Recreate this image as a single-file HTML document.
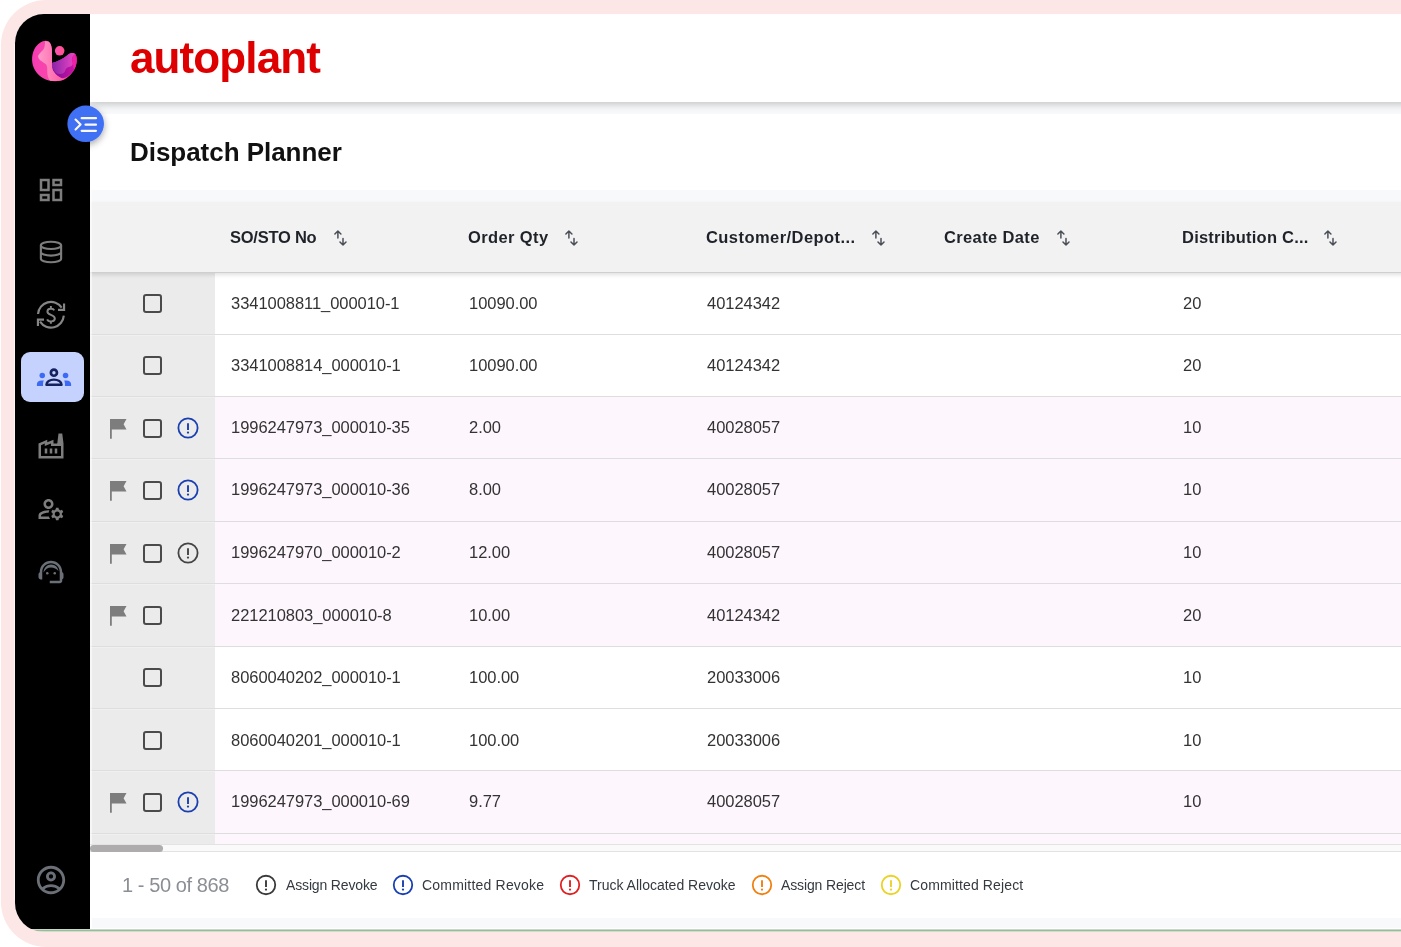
<!DOCTYPE html>
<html lang="en">
<head>
<meta charset="utf-8">
<title>Dispatch Planner</title>
<style>
*{box-sizing:border-box;margin:0;padding:0}
html,body{width:1401px;height:947px;overflow:hidden;background:#fff;font-family:"Liberation Sans",sans-serif;color:#333}
.abs{position:absolute}
#brand,#title,.th,.td,#count,.lg{will-change:transform}
#frame{position:absolute;left:1px;top:0;width:1400px;height:947px;background:#fce7e6;border-radius:45px 0 0 45px}
#app{position:absolute;left:15px;top:14px;width:1386px;height:918px;border-radius:29px 0 0 29px;overflow:hidden;background:linear-gradient(to bottom,#c9d6c9 0 915px,#c9d6c9 915px 916px,#a0b6a1 916px 917px,#c6e4c3 917px 918px)}
#inner{position:absolute;left:0;top:0;width:1386px;height:915px;background:#f8f9fa;overflow:hidden}
#side{position:absolute;left:0;top:0;width:75px;height:915px;background:#000;z-index:5}
#main{position:absolute;left:75px;top:0;width:1311px;height:915px}
#hdr{position:absolute;left:0;top:0;width:1360px;height:88px;background:#fff;box-shadow:0 2px 8px rgba(0,0,0,.23)}
#brand{position:absolute;left:40px;top:18px;font-size:44px;font-weight:700;color:#de0000;line-height:52px;letter-spacing:-.88px}
#titlebar{position:absolute;left:0;top:100px;width:1311px;height:76px;background:#fff}
#title{position:absolute;left:40px;top:22px;font-size:26px;font-weight:700;color:#111;line-height:32px;letter-spacing:-.04px}
#thead{position:absolute;left:0;top:188px;width:1360px;height:71px;background:#f2f2f2;border-bottom:1px solid #cfcfcf;box-shadow:0 2px 4px rgba(0,0,0,.12);z-index:3}
.th{position:absolute;top:0;height:70px;line-height:70px;font-size:16.5px;font-weight:700;color:#1f2329;white-space:nowrap}
.th svg{position:absolute;top:28px}
#tbody{position:absolute;left:0;top:258px;width:1311px;height:572px;overflow:hidden;background:#fff}
.row{position:absolute;left:0;width:1311px;border-bottom:1px solid #dedede;background:#fff}
.row.p{background:#fdf6fd}
.fz{position:absolute;left:0;top:0;width:125px;height:100%;background:#ebebeb;box-shadow:inset 0 1px 0 #f1eff1}
.td{position:absolute;top:0;font-size:16.5px;color:#333;white-space:nowrap;letter-spacing:-.05px}
.ic{position:absolute;left:0;width:125px;height:0}
.cb{position:absolute;left:53px;top:22px;width:19px;height:19px;border:2px solid #4a4a4a;border-radius:3px}
.flag{position:absolute;left:20px;top:22px}
.ex{position:absolute;left:87.2px;top:19.900px}
#sbar{position:absolute;left:0;top:830px;width:1311px;height:8px;background:#fafafa;border-top:1px solid #e3e3e3;border-bottom:1px solid #e2e2e2}
#thumb{position:absolute;left:0;top:0;width:73px;height:7px;border-radius:3.5px;background:#aeacad}
#foot{position:absolute;left:0;top:838px;width:1311px;height:66px;background:#fff}
#count{position:absolute;left:31.5px;top:21px;font-size:20px;line-height:24px;color:#8b8f95;white-space:nowrap;letter-spacing:-.42px}
.lg{position:absolute;top:0;height:66px;line-height:66px;font-size:14px;color:#343a40;white-space:nowrap}
.lgi{position:absolute;top:22.200px;margin-left:.3px}
</style>
</head>
<body>
<div id="frame"></div>
<div class="abs" style="left:14px;top:44px;width:1px;height:856px;background:#fff3f3"></div>
<div id="app"><div id="inner">
  <div id="main">
    <div id="titlebar"><div id="title">Dispatch Planner</div></div>
    <div id="thead">
<div class="th" style="left:140px;letter-spacing:-0.25px">SO/STO No<svg width="14" height="18" viewBox="0 0 14 18" style="left:103.5px"><path d="M3.9 7.900V1M0.900 4L3.900 1L6.900 4M9 8.500V15M6 12L9 15L12 12" fill="none" stroke="#4a4f57" stroke-width="1.5" stroke-linecap="round" stroke-linejoin="round"/></svg></div>
<div class="th" style="left:378px;letter-spacing:0.39px">Order Qty<svg width="14" height="18" viewBox="0 0 14 18" style="left:97px"><path d="M3.9 7.900V1M0.900 4L3.900 1L6.900 4M9 8.500V15M6 12L9 15L12 12" fill="none" stroke="#4a4f57" stroke-width="1.5" stroke-linecap="round" stroke-linejoin="round"/></svg></div>
<div class="th" style="left:616px;letter-spacing:0.44px">Customer/Depot...<svg width="14" height="18" viewBox="0 0 14 18" style="left:165.5px"><path d="M3.9 7.900V1M0.900 4L3.900 1L6.900 4M9 8.500V15M6 12L9 15L12 12" fill="none" stroke="#4a4f57" stroke-width="1.5" stroke-linecap="round" stroke-linejoin="round"/></svg></div>
<div class="th" style="left:854px;letter-spacing:0.36px">Create Date<svg width="14" height="18" viewBox="0 0 14 18" style="left:112.5px"><path d="M3.9 7.900V1M0.900 4L3.900 1L6.900 4M9 8.500V15M6 12L9 15L12 12" fill="none" stroke="#4a4f57" stroke-width="1.5" stroke-linecap="round" stroke-linejoin="round"/></svg></div>
<div class="th" style="left:1092px;letter-spacing:0.22px">Distribution C...<svg width="14" height="18" viewBox="0 0 14 18" style="left:142px"><path d="M3.9 7.900V1M0.900 4L3.900 1L6.900 4M9 8.500V15M6 12L9 15L12 12" fill="none" stroke="#4a4f57" stroke-width="1.5" stroke-linecap="round" stroke-linejoin="round"/></svg></div>
</div>
    <div id="tbody">
<div class="row" style="top:1px;height:62px;line-height:61px"><div class="fz" style="box-shadow:none"><div class="ic" style="top:-1px"><div class="cb"></div></div></div><div class="td" style="left:140.6px">3341008811_000010-1</div><div class="td" style="left:378.6px">10090.00</div><div class="td" style="left:616.6px">40124342</div><div class="td" style="left:1092.6px">20</div></div>
<div class="row" style="top:63px;height:62px;line-height:61px"><div class="fz"><div class="ic" style="top:-1px"><div class="cb"></div></div></div><div class="td" style="left:140.6px">3341008814_000010-1</div><div class="td" style="left:378.6px">10090.00</div><div class="td" style="left:616.6px">40124342</div><div class="td" style="left:1092.6px">20</div></div>
<div class="row p" style="top:125px;height:62px;line-height:61px"><div class="fz"><div class="ic" style="top:0px"><svg class="flag" width="18" height="21" viewBox="0 0 18 21"><path d="M0 0H16.5L13.6 5.3L16.5 10.6H1.8V19.700H0Z" fill="#7d7d7d"/></svg><div class="cb"></div><svg class="ex" width="22" height="22" viewBox="0 0 22 22"><circle cx="11" cy="11" r="9.6" fill="none" stroke="#1a3fb0" stroke-width="1.8"/><path d="M11 6.2V13" stroke="#1a3fb0" stroke-width="1.9" fill="none"/><circle cx="11" cy="15.6" r="1.15" fill="#1a3fb0"/></svg></div></div><div class="td" style="left:140.6px">1996247973_000010-35</div><div class="td" style="left:378.6px">2.00</div><div class="td" style="left:616.6px">40028057</div><div class="td" style="left:1092.6px">10</div></div>
<div class="row p" style="top:187px;height:63px;line-height:62px"><div class="fz"><div class="ic" style="top:0px"><svg class="flag" width="18" height="21" viewBox="0 0 18 21"><path d="M0 0H16.5L13.6 5.3L16.5 10.6H1.8V19.700H0Z" fill="#7d7d7d"/></svg><div class="cb"></div><svg class="ex" width="22" height="22" viewBox="0 0 22 22"><circle cx="11" cy="11" r="9.6" fill="none" stroke="#1a3fb0" stroke-width="1.8"/><path d="M11 6.2V13" stroke="#1a3fb0" stroke-width="1.9" fill="none"/><circle cx="11" cy="15.6" r="1.15" fill="#1a3fb0"/></svg></div></div><div class="td" style="left:140.6px;top:-1px">1996247973_000010-36</div><div class="td" style="left:378.6px;top:-1px">8.00</div><div class="td" style="left:616.6px;top:-1px">40028057</div><div class="td" style="left:1092.6px;top:-1px">10</div></div>
<div class="row p" style="top:250px;height:62px;line-height:61px"><div class="fz"><div class="ic" style="top:0px"><svg class="flag" width="18" height="21" viewBox="0 0 18 21"><path d="M0 0H16.5L13.6 5.3L16.5 10.6H1.8V19.700H0Z" fill="#7d7d7d"/></svg><div class="cb"></div><svg class="ex" width="22" height="22" viewBox="0 0 22 22"><circle cx="11" cy="11" r="9.6" fill="none" stroke="#444" stroke-width="1.8"/><path d="M11 6.2V13" stroke="#444" stroke-width="1.9" fill="none"/><circle cx="11" cy="15.6" r="1.15" fill="#444"/></svg></div></div><div class="td" style="left:140.6px">1996247970_000010-2</div><div class="td" style="left:378.6px">12.00</div><div class="td" style="left:616.6px">40028057</div><div class="td" style="left:1092.6px">10</div></div>
<div class="row p" style="top:312px;height:63px;line-height:62px"><div class="fz"><div class="ic" style="top:0px"><svg class="flag" width="18" height="21" viewBox="0 0 18 21"><path d="M0 0H16.5L13.6 5.3L16.5 10.6H1.8V19.700H0Z" fill="#7d7d7d"/></svg><div class="cb"></div></div></div><div class="td" style="left:140.6px">221210803_000010-8</div><div class="td" style="left:378.6px">10.00</div><div class="td" style="left:616.6px">40124342</div><div class="td" style="left:1092.6px">20</div></div>
<div class="row" style="top:375px;height:62px;line-height:61px"><div class="fz"><div class="ic" style="top:-1px"><div class="cb"></div></div></div><div class="td" style="left:140.6px">8060040202_000010-1</div><div class="td" style="left:378.6px">100.00</div><div class="td" style="left:616.6px">20033006</div><div class="td" style="left:1092.6px">10</div></div>
<div class="row" style="top:437px;height:62px;line-height:61px"><div class="fz"><div class="ic" style="top:0px"><div class="cb"></div></div></div><div class="td" style="left:140.6px;top:1px">8060040201_000010-1</div><div class="td" style="left:378.6px;top:1px">100.00</div><div class="td" style="left:616.6px;top:1px">20033006</div><div class="td" style="left:1092.6px;top:1px">10</div></div>
<div class="row p" style="top:499px;height:63px;line-height:62px"><div class="fz"><div class="ic" style="top:0px"><svg class="flag" width="18" height="21" viewBox="0 0 18 21"><path d="M0 0H16.5L13.6 5.3L16.5 10.6H1.8V19.700H0Z" fill="#7d7d7d"/></svg><div class="cb"></div><svg class="ex" width="22" height="22" viewBox="0 0 22 22"><circle cx="11" cy="11" r="9.6" fill="none" stroke="#1a3fb0" stroke-width="1.8"/><path d="M11 6.2V13" stroke="#1a3fb0" stroke-width="1.9" fill="none"/><circle cx="11" cy="15.6" r="1.15" fill="#1a3fb0"/></svg></div></div><div class="td" style="left:140.6px;top:-1px">1996247973_000010-69</div><div class="td" style="left:378.6px;top:-1px">9.77</div><div class="td" style="left:616.6px;top:-1px">40028057</div><div class="td" style="left:1092.6px;top:-1px">10</div></div>
<div class="row p" style="top:562px;height:63px;line-height:62px"><div class="fz"><div class="ic" style="top:0px"></div></div></div>
</div>
    <div id="sbar"><div id="thumb"></div></div>
    <div id="foot"><div id="count">1 - 50 of 868</div>
<svg class="lgi" style="left:165px" width="22" height="22" viewBox="0 0 22 22"><circle cx="11" cy="11" r="9.25" fill="none" stroke="#3a3a3a" stroke-width="1.8"/><path d="M11 6.2V13" stroke="#3a3a3a" stroke-width="1.9" fill="none"/><circle cx="11" cy="15.6" r="1.15" fill="#3a3a3a"/></svg><div class="lg" style="left:196px;letter-spacing:-0.15px">Assign Revoke</div>
<svg class="lgi" style="left:302px" width="22" height="22" viewBox="0 0 22 22"><circle cx="11" cy="11" r="9.25" fill="none" stroke="#1a3fb0" stroke-width="1.8"/><path d="M11 6.2V13" stroke="#1a3fb0" stroke-width="1.9" fill="none"/><circle cx="11" cy="15.6" r="1.15" fill="#1a3fb0"/></svg><div class="lg" style="left:332px;letter-spacing:0.2px">Committed Revoke</div>
<svg class="lgi" style="left:469px" width="22" height="22" viewBox="0 0 22 22"><circle cx="11" cy="11" r="9.25" fill="none" stroke="#e02020" stroke-width="1.8"/><path d="M11 6.2V13" stroke="#e02020" stroke-width="1.9" fill="none"/><circle cx="11" cy="15.6" r="1.15" fill="#e02020"/></svg><div class="lg" style="left:499px;letter-spacing:0px">Truck Allocated Revoke</div>
<svg class="lgi" style="left:661px" width="22" height="22" viewBox="0 0 22 22"><circle cx="11" cy="11" r="9.25" fill="none" stroke="#f08010" stroke-width="1.8"/><path d="M11 6.2V13" stroke="#f08010" stroke-width="1.9" fill="none"/><circle cx="11" cy="15.6" r="1.15" fill="#f08010"/></svg><div class="lg" style="left:691px;letter-spacing:-0.13px">Assign Reject</div>
<svg class="lgi" style="left:790px" width="22" height="22" viewBox="0 0 22 22"><circle cx="11" cy="11" r="9.25" fill="none" stroke="#ebd322" stroke-width="1.8"/><path d="M11 6.2V13" stroke="#ebd322" stroke-width="1.9" fill="none"/><circle cx="11" cy="15.6" r="1.15" fill="#ebd322"/></svg><div class="lg" style="left:820px;letter-spacing:0.13px">Committed Reject</div>
</div>
    <div class="abs" style="left:0;top:904px;width:2px;height:11px;background:#fff"></div>
    <div class="abs" style="left:0;top:914px;width:1311px;height:1px;background:#fff"></div>
    <div class="abs" style="left:0;top:100px;width:2px;height:730px;background:rgba(255,255,255,.55);z-index:4"></div>
    <div id="hdr"><div id="brand">autoplant</div></div>
  </div>
  <div id="side">
<!-- logo: region [25,35]-[85,90] in page coords => side coords left 10, top 21 -->
<svg class="abs" style="left:10px;top:21px" width="60" height="55" viewBox="0 0 1033 947">
<defs>
<linearGradient id="lgA" x1="0" y1="0" x2="1" y2="0"><stop offset="0" stop-color="#f53cb4"/><stop offset="1" stop-color="#ff5a9c"/></linearGradient>
<linearGradient id="lgB" x1="0" y1="0" x2="1" y2="0"><stop offset="0" stop-color="#ff9ccb"/><stop offset="1" stop-color="#ff58a2"/></linearGradient>
<linearGradient id="lgC" x1="0" y1="0" x2="1" y2="0"><stop offset="0" stop-color="#8a22a8"/><stop offset="1" stop-color="#ea48c4"/></linearGradient>
<linearGradient id="lgD" x1="0" y1="0" x2="1" y2="0"><stop offset="0" stop-color="#7a0f98"/><stop offset="1" stop-color="#d414a4"/></linearGradient>
<linearGradient id="lgE" x1="0" y1="0" x2="1" y2="0"><stop offset="0" stop-color="#ff4fb4"/><stop offset="1" stop-color="#ff548c"/></linearGradient>
</defs>
<path d="M350 100C420 95 455 150 463 250L466 480C540 470 640 420 740 340C790 300 850 300 875 345C905 410 890 520 850 590C800 680 720 760 620 785C540 800 450 800 380 775C270 735 170 640 135 520C105 400 130 280 190 200C235 140 290 105 350 100Z" fill="url(#lgA)"/>
<path d="M466 480C540 470 640 420 740 340C790 300 850 300 875 345C905 410 890 520 850 590C800 680 720 740 640 745C560 730 490 650 470 590Z" fill="url(#lgD)"/>
<path d="M466 480C540 470 640 420 740 340C780 310 830 300 860 330C800 380 800 420 820 470C835 530 780 550 740 555C690 570 700 640 650 665C610 680 560 670 530 650C490 610 470 560 466 480Z" fill="url(#lgC)"/>
<path d="M860 335C895 390 895 500 850 590C830 560 830 520 822 480C800 420 810 370 860 335Z" fill="#ef1fa6"/>
<path d="M345 108C420 95 455 150 463 250L466 560C480 640 560 720 670 765C600 795 500 800 430 788C390 740 385 680 383 610C385 540 380 510 330 480C280 450 230 420 225 370C225 340 270 300 310 260C340 225 345 170 345 108Z" fill="url(#lgB)"/>
<circle cx="597" cy="272" r="82" fill="url(#lgE)"/>
</svg>
<!-- toggle button region [60,98]-[112,150] => side coords left 45, top 84 -->
<svg class="abs" style="left:45px;top:84px;z-index:9;overflow:visible" width="52" height="52" viewBox="0 0 947 947">
<defs><filter id="tsh" x="-50%" y="-50%" width="200%" height="200%"><feDropShadow dx="0" dy="45" stdDeviation="70" flood-color="#000" flood-opacity=".36"/></filter></defs>
<circle cx="468" cy="470" r="333" fill="#4070f4" filter="url(#tsh)"/>
<path d="M283 392L375 483L283 575" fill="none" stroke="#fdf8ee" stroke-width="38" stroke-linecap="round" stroke-linejoin="round"/>
<path d="M395 368H655M465 485H655M395 598H655" fill="none" stroke="#fdf8ee" stroke-width="41" stroke-linecap="round"/>
</svg>
<!-- dashboard center (51,189.5) page => side (36,175.5), 30px -->
<svg class="abs" style="left:21px;top:160.5px" width="30" height="30" viewBox="0 0 24 24" fill="#7d7d7d"><path d="M19 5v2h-4V5h4M9 5v6H5V5h4m10 8v6h-4v-6h4M9 17v2H5v-2h4M21 3h-8v6h8V3zM11 3H3v10h8V3zm10 8h-8v10h8V11zm-10 4H3v6h8v-6z"/></svg>
<!-- database center (51,252) => side (36,238) -->
<svg class="abs" style="left:21px;top:223px" width="30" height="30" viewBox="0 0 24 24" fill="none" stroke="#7d7d7d" stroke-width="1.7"><ellipse cx="12" cy="6.7" rx="8.1" ry="2.9"/><path d="M3.9 6.7V17.3C3.9 18.9 7.5 20.2 12 20.2S20.100 18.9 20.100 17.300V6.700M3.900 12C3.900 13.600 7.500 14.900 12 14.900S20.100 13.600 20.100 12"/></svg>
<!-- currency exchange region [30,290]-[72,340] => side left 15, top 276 -->
<svg class="abs" style="left:15px;top:276px" width="42" height="50" viewBox="0 0 795 947" fill="none" stroke="#858585" stroke-width="41">
<path d="M152 455A245 245 0 0 1 600 335"/><path d="M530 375H645V258"/>
<path d="M640 485A245 245 0 0 1 190 600"/><path d="M265 560H150V680"/>
<path d="M458 385C440 345 330 340 330 410C330 480 470 460 470 540C470 610 350 610 325 555M395 305V350M395 595V640" stroke-width="37"/>
</svg>
<!-- active tile page [21,352]-[84,402] => side left 6, top 338 -->
<div class="abs" style="left:6px;top:338px;width:63px;height:50px;border-radius:9px;background:#c5d2fd"></div>
<svg class="abs" style="left:15px;top:341px" width="50" height="45" viewBox="0 0 1052 947">
<circle cx="503" cy="372" r="64" fill="none" stroke="#14235f" stroke-width="56"/>
<path d="M345 625C345 560 420 517 503 517C590 517 665 560 665 625Z" fill="none" stroke="#14235f" stroke-width="50" stroke-linejoin="round"/>
<circle cx="258" cy="433" r="58" fill="#3d6af5"/><circle cx="748" cy="433" r="58" fill="#3d6af5"/>
<path d="M145 650V612C145 565 185 535 240 535H292C275 565 272 600 275 650Z" fill="#3d6af5"/>
<path d="M735 650C738 600 735 565 718 535H770C825 535 865 565 865 612V650Z" fill="#3d6af5"/>
</svg>
<!-- factory center (50.6,446.3) => side (35.6,432.3) -->
<svg class="abs" style="left:20.5px;top:416.5px" width="30" height="30" viewBox="0 0 24 24" fill="#7d7d7d"><path d="M22 22H2V10l7-3v2l5-2v3h3l1-8h3l1 8V22zM12 9.950l-5 2V10l-3 1.320V20h16v-8h-8V9.950zM11 18h2v-4h-2V18zM7 18h2v-4H7V18zM17 14h-2v4h2V14z"/></svg>
<!-- manage accounts center (50.6,509.5) => side (35.6,495.5) -->
<svg class="abs" style="left:20.5px;top:480px" width="30" height="30" viewBox="0 0 24 24" fill="#7d7d7d"><path d="M4 18v-.65c0-.34.16-.66.41-.81C6.100 15.530 8.030 15 10 15c.03 0 .05 0 .08.010.1-.7.300-1.370.59-1.980-.22-.02-.44-.03-.67-.03-2.420 0-4.680.67-6.610 1.820-.88.520-1.390 1.500-1.390 2.530V20h9.260c-.42-.6-.75-1.280-.97-2H4zM10 12c2.210 0 4-1.790 4-4s-1.790-4-4-4-4 1.790-4 4 1.790 4 4 4zm0-6c1.100 0 2 .9 2 2s-.9 2-2 2-2-.9-2-2 .9-2 2-2zM20.750 16c0-.22-.03-.42-.06-.63l1.140-1.010-1-1.730-1.450.49c-.32-.27-.68-.48-1.080-.63L18 11h-2l-.3 1.490c-.4.150-.76.360-1.080.63l-1.450-.49-1 1.730 1.140 1.010c-.03.210-.06.410-.06.630s.03.420.06.630l-1.140 1.010 1 1.730 1.450-.49c.32.270.68.480 1.080.63L16 21h2l.3-1.490c.4-.15.760-.36 1.080-.63l1.450.49 1-1.730-1.140-1.010c.03-.21.06-.41.06-.63zM17 18c-1.100 0-2-.9-2-2s.9-2 2-2 2 .9 2 2-.9 2-2 2z"/></svg>
<!-- support agent center (50.7,571.8) => side (35.7,557.8) -->
<svg class="abs" style="left:20.5px;top:542.5px" width="30" height="30" viewBox="0 0 24 24" fill="#6b7078"><path d="M21 12.220C21 6.730 16.740 3 12 3c-4.690 0-9 3.650-9 9.280-.6.340-1 .980-1 1.720v2c0 1.100.9 2 2 2h1v-6.100c0-3.870 3.130-7 7-7s7 3.130 7 7V19h-8v2h8c1.100 0 2-.9 2-2v-1.220c.59-.31 1-.92 1-1.640v-2.300c0-.7-.41-1.310-1-1.620z"/><circle cx="9" cy="13" r="1"/><circle cx="15" cy="13" r="1"/><path d="M6.050 12.400C6.200 8.500 8.900 6 12.050 6C15.100 6 17.600 8.200 18 11.200C16.500 9.400 14.400 8.400 12 8.400C9.400 8.400 7.300 9.900 6.050 12.400Z"/></svg>
<!-- account circle center (51,880) => side (36,866), 34px -->
<svg class="abs" style="left:19px;top:849px" width="34" height="34" viewBox="0 0 24 24" fill="#6b7078"><path d="M12 2C6.480 2 2 6.480 2 12s4.480 10 10 10 10-4.480 10-10S17.520 2 12 2zM7.350 18.500C8.660 17.560 10.260 17 12 17s3.340.56 4.650 1.500C15.340 19.440 13.740 20 12 20s-3.340-.56-4.650-1.500zm10.790-1.380C16.450 15.800 14.320 15 12 15s-4.450.8-6.140 2.120C4.700 15.730 4 13.950 4 12c0-4.420 3.580-8 8-8s8 3.580 8 8c0 1.950-.7 3.730-1.860 5.120zM12 6c-1.930 0-3.500 1.570-3.500 3.500S10.070 13 12 13s3.500-1.570 3.500-3.500S13.930 6 12 6zm0 5c-.83 0-1.500-.67-1.500-1.500S11.170 8 12 8s1.500.67 1.500 1.500S12.830 11 12 11z"/></svg>
</div>
</div></div>
</body>
</html>
